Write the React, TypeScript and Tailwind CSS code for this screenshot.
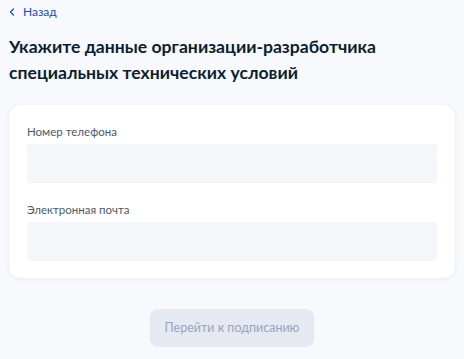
import { ChevronLeft } from "lucide-react"

export default function App() {
  return (
    <div
      className="min-h-screen w-[464px] bg-[#f8f9fc] px-[9px] pt-[4px] text-[#0b1f33]"
      style={{ fontFamily: "Lato, 'Noto Sans', sans-serif" }}
    >
      <a href="#" className="flex items-center gap-[5px] text-[12px] leading-[16px] text-[#0d4cd3]">
        <ChevronLeft className="ml-[-3px] h-[12px] w-[12px]" strokeWidth={2.5} />
        <span>Назад</span>
      </a>

      <h1 className="mt-[14px] text-[17.6px] font-bold leading-[26px] text-[#0b1f33]">
        Укажите данные организации-разработчика
        <br />
        специальных технических условий
      </h1>

      <div className="mt-[19px] rounded-[12px] bg-white px-[18px] pb-[17px] pt-[19px] shadow-[0_1px_4px_rgba(26,45,80,0.08)]">
        <label className="block text-[11.5px] leading-[16px] text-[#4e5966]">Номер телефона</label>
        <div className="mt-[4px] h-[39px] rounded-[4px] bg-[#f5f6fa]" />

        <label className="mt-[19px] block text-[11.5px] leading-[16px] text-[#4e5966]">Электронная почта</label>
        <div className="mt-[4px] h-[39px] rounded-[4px] bg-[#f5f6fa]" />
      </div>

      <div className="mt-[31px] flex justify-center">
        <button className="h-[38px] w-[164px] rounded-[8px] bg-[#e4e9f2] text-[12.5px] text-[#9aa6b8]">
          Перейти к подписанию
        </button>
      </div>
    </div>
  )
}
